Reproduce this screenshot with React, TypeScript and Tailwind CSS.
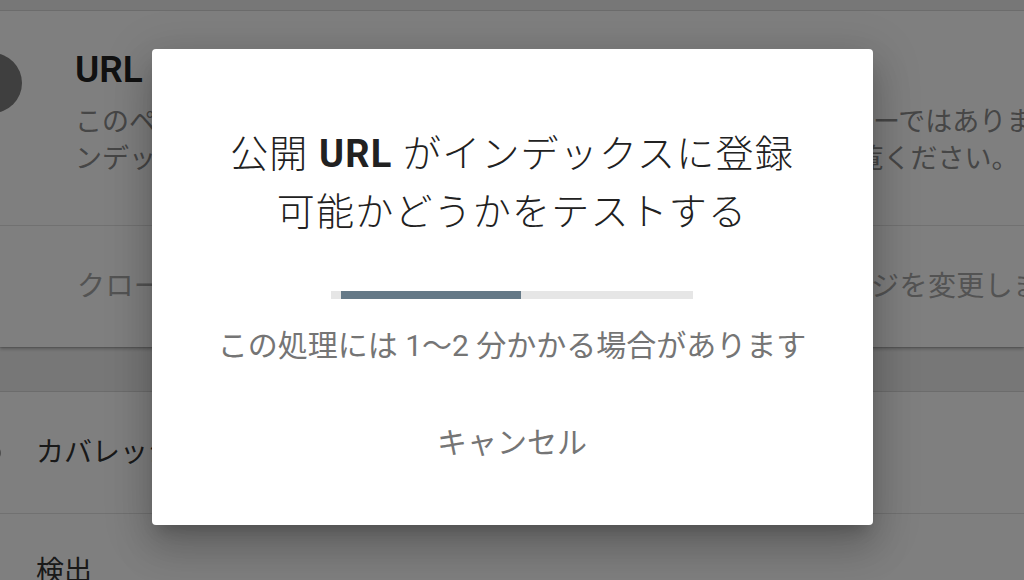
import { Info } from 'lucide-react';

const font = { fontFamily: 'Roboto, "Noto Sans CJK JP", sans-serif' };

function BackgroundPage() {
    return (
        <div className="w-full h-full bg-[#eeeeee] pt-[11px] overflow-hidden">
            {/* 上のカード: URL の状態 */}
            <section className="bg-white shadow-[0_0_0_1px_rgba(0,0,0,0.08),0_2px_3px_rgba(0,0,0,0.25)]">
                <div className="flex items-start h-[214px] pt-[37px]">
                    <div className="w-[60px] h-[60px] rounded-full bg-[#7e7e7e] ml-[-38px] mt-[5px] shrink-0" />
                    <div className="ml-[53px] whitespace-nowrap">
                        <h2 className="text-[37px] leading-[44px] font-semibold text-[#222222]">
                            URL は Google に登録されています
                        </h2>
                        <p className="mt-[12px] text-[27px] leading-[37px] text-[#8c8c8c]">
                            このページは Google のインデックスに登録されていますが、エラーではありません。イ
                            <br />
                            ンデックス登録されない理由について詳しくは、ヘルプ記事をご覧ください。
                        </p>
                    </div>
                </div>
                <div className="flex items-center h-[122px] border-t border-[#e2e2e2] pl-[77px] whitespace-nowrap">
                    <span className="text-[28px] tracking-[0.4px] text-[#a6a6a6]">
                        クロールされたページを確認するには、テスト結果の表示ページを変更します
                    </span>
                </div>
            </section>

            {/* 下のカード: カバレッジ */}
            <section className="mt-[45px] bg-white shadow-[0_0_0_1px_rgba(0,0,0,0.08),0_2px_3px_rgba(0,0,0,0.25)]">
                <div className="flex items-center h-[121px] whitespace-nowrap">
                    <Info className="w-[28px] h-[28px] ml-[-26px] text-[#444444]" strokeWidth={1.5} />
                    <span className="ml-[34px] text-[28px] text-[#333333]">カバレッジ</span>
                </div>
                <div className="border-t border-[#e2e2e2] pl-[36px] pt-[40px] h-[120px]">
                    <span className="text-[28px] leading-[36px] text-[#333333]">検出</span>
                </div>
            </section>
        </div>
    );
}

export default function App() {
    return (
        <div className="relative w-full h-[580px] overflow-hidden" style={font}>
            <BackgroundPage />

            <div className="absolute inset-0 bg-black/50 flex items-center justify-center">
                <div className="w-[721px] h-[476px] mt-[-6px] bg-white rounded-[4px] flex flex-col items-center pt-[76px] shadow-[0_11px_15px_-7px_rgba(0,0,0,0.2),0_24px_38px_3px_rgba(0,0,0,0.14),0_9px_46px_8px_rgba(0,0,0,0.12)]">
                    <h1 className="text-[38px] leading-[58px] tracking-[1.2px] font-light text-[#212121] text-center">
                        公開 <span className="font-bold">URL</span> がインデックスに登録
                        <br />
                        可能かどうかをテストする
                    </h1>

                    <div className="mt-[50px] w-[362px] h-[8px] bg-[#e6e6e6] pl-[10px]">
                        <div className="w-[180px] h-full bg-[#657987]" />
                    </div>

                    <p className="mt-[27px] text-[30px] leading-[40px] text-[#757575]">
                        この処理には 1〜2 分かかる場合があります
                    </p>

                    <button className="mt-[57px] px-4 text-[30px] leading-[40px] text-[#757575]">
                        キャンセル
                    </button>
                </div>
            </div>
        </div>
    );
}
